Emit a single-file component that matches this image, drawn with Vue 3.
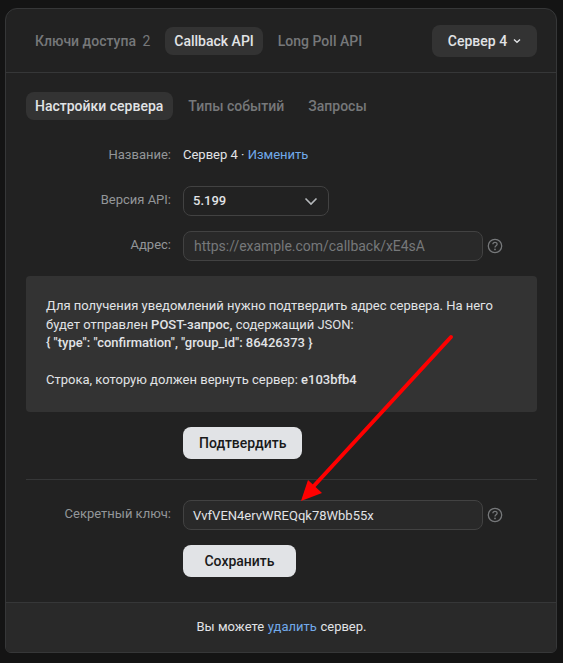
<template>
  <div class="page">
    <div class="card">
      <!-- Верхние вкладки -->
      <div class="head">
        <div class="tabs">
          <span class="tab">Ключи доступа <span class="count">2</span></span>
          <span class="tab active">Callback API</span>
          <span class="tab">Long Poll API</span>
        </div>
        <button class="server-btn">
          Сервер 4
          <svg width="10" height="10" viewBox="0 0 10 10"><path d="M2 3.5 L5 6.2 L8 3.5" fill="none" stroke="#e1e3e6" stroke-width="1.4" /></svg>
        </button>
      </div>

      <div class="body">
        <div class="subtabs">
          <span class="subtab active">Настройки сервера</span>
          <span class="subtab">Типы событий</span>
          <span class="subtab">Запросы</span>
        </div>

        <div class="row name-row">
          <div class="label">Название:</div>
          <div class="value">Сервер 4 · <a class="link">Изменить</a></div>
        </div>

        <div class="row version-row">
          <div class="label">Версия API:</div>
          <div class="select">
            <span class="select-text">5.199</span>
            <svg width="16" height="16" viewBox="0 0 16 16"><path d="M2.5 5.5 L8 11 L13.5 5.5" fill="none" stroke="#b5b8bb" stroke-width="1.6" /></svg>
          </div>
        </div>

        <div class="row address-row">
          <div class="label">Адрес:</div>
          <div class="input placeholder">https://example.com/callback/xE4sA</div>
          <svg class="help" width="16" height="16" viewBox="0 0 16 16">
            <circle cx="8" cy="8" r="6.7" fill="none" stroke="#76787a" stroke-width="1.3" />
            <path d="M5.9 6.3 C5.9 3.8 10.1 3.8 10.1 6.2 C10.1 7.7 8 7.7 8 9.4" fill="none" stroke="#76787a" stroke-width="1.3" />
            <circle cx="8" cy="11.4" r="0.9" fill="#76787a" />
          </svg>
        </div>

        <div class="info">
          Для получения уведомлений нужно подтвердить адрес сервера. На него<br />
          будет отправлен <b>POST-запрос,</b> содержащий JSON:<br />
          <b>{ "type": "confirmation", "group_id": 86426373 }</b><br />
          <br />
          Строка, которую должен вернуть сервер: <b>e103bfb4</b>
        </div>

        <div class="action confirm">
          <button class="btn">Подтвердить</button>
        </div>

        <div class="divider"></div>

        <div class="row secret-row">
          <div class="label">Секретный ключ:</div>
          <div class="input">VvfVEN4ervWREQqk78Wbb55x</div>
          <svg class="help" width="16" height="16" viewBox="0 0 16 16">
            <circle cx="8" cy="8" r="6.7" fill="none" stroke="#76787a" stroke-width="1.3" />
            <path d="M5.9 6.3 C5.9 3.8 10.1 3.8 10.1 6.2 C10.1 7.7 8 7.7 8 9.4" fill="none" stroke="#76787a" stroke-width="1.3" />
            <circle cx="8" cy="11.4" r="0.9" fill="#76787a" />
          </svg>
        </div>

        <div class="action save">
          <button class="btn">Сохранить</button>
        </div>
      </div>

      <div class="foot">Вы можете <a class="link">удалить</a> сервер.</div>
    </div>

    <!-- Красная стрелка поверх скриншота -->
    <svg class="arrow" width="563" height="663" viewBox="0 0 563 663">
      <line x1="451" y1="337" x2="312" y2="488" stroke="#ff0000" stroke-width="4" stroke-linecap="round" />
      <polygon points="301,501 308,480 322,493" fill="#ff0000" />
    </svg>
  </div>
</template>

<script setup>
</script>

<style>
html,
body {
  margin: 0;
  background: #141414;
}
</style>

<style scoped>
.page {
  position: relative;
  width: 563px;
  height: 663px;
  padding: 8px 6px 10px 5px;
  box-sizing: border-box;
  background: #141414;
  font-family: Roboto, "Noto Sans", sans-serif;
  font-size: 13px;
  color: #e1e3e6;
  overflow: hidden;
}

.card {
  height: 645px;
  display: flex;
  flex-direction: column;
  box-sizing: border-box;
  background: #222222;
  border: 1px solid #363738;
  border-radius: 12px 12px 6px 6px;
  overflow: hidden;
}

.head {
  height: 64px;
  flex: none;
  display: flex;
  align-items: center;
  justify-content: space-between;
  box-sizing: border-box;
  padding: 0 19px 0 20px;
  border-bottom: 1px solid #363738;
}

.tabs,
.subtabs {
  display: flex;
  align-items: center;
}

.tabs {
  gap: 6px;
}

.tab,
.subtab {
  height: 28px;
  line-height: 28px;
  padding: 0 9px;
  border-radius: 8px;
  color: #76787a;
  font-size: 14px;
  font-weight: 500;
  white-space: nowrap;
}

.tab .count {
  margin-left: 3px;
  font-weight: 400;
}

.tab.active,
.subtab.active {
  background: #333333;
  color: #e1e3e6;
}

.subtab.active {
  padding-right: 10px;
}

.server-btn {
  width: 105px;
  height: 32px;
  display: flex;
  align-items: center;
  justify-content: center;
  gap: 5px;
  padding: 0 0 0 1px;
  background: #333333;
  border: 0;
  border-radius: 8px;
  color: #e1e3e6;
  font: 500 14px Roboto, sans-serif;
}

.body {
  flex: 1;
  padding: 19px 19px 0 20px;
}

.subtabs {
  gap: 6px;
}

.row {
  display: flex;
  align-items: center;
}

.label {
  width: 145px;
  flex: none;
  margin-right: 12px;
  margin-bottom: 3px;
  text-align: right;
  color: #939699;
}

.name-row {
  margin-top: 22px;
  height: 24px;
}

.name-row .label {
  margin-bottom: 0;
}

.version-row {
  margin-top: 20px;
}

.address-row {
  margin-top: 15px;
}

.link {
  color: #71aaeb;
  text-decoration: none;
}

.select,
.input {
  height: 30px;
  display: flex;
  align-items: center;
  box-sizing: border-box;
  background: #292929;
  border: 1px solid #424242;
  border-radius: 8px;
  padding: 0 9px;
  white-space: nowrap;
}

.select {
  width: 146px;
  justify-content: space-between;
  background: #222222;
  font-weight: 500;
}

.select-text {
  margin-bottom: 1px;
}

.input {
  width: 300px;
  margin-right: 4px;
}

.placeholder {
  color: #76787a;
  font-size: 14px;
  padding-left: 10px;
  letter-spacing: -0.03px;
}

.help {
  flex: none;
}

.info {
  margin-top: 15px;
  height: 136px;
  box-sizing: border-box;
  padding: 21px 20px 0;
  background: #333333;
  border-radius: 4px;
  line-height: 18.6px;
}

.info b {
  font-weight: 500;
}

.action {
  padding-left: 157px;
}

.confirm {
  margin-top: 15px;
}

.btn {
  height: 32px;
  padding: 0 16px;
  background: #e1e3e6;
  border: 0;
  border-radius: 8px;
  color: #19191a;
  font: 500 14px Roboto, sans-serif;
}

.save .btn {
  width: 113px;
  padding: 0;
}

.divider {
  margin-top: 20px;
  height: 1px;
  background: #363738;
}

.secret-row {
  margin-top: 20px;
}

.save {
  margin-top: 15px;
}

.foot {
  height: 50px;
  flex: none;
  display: flex;
  align-items: center;
  justify-content: center;
  gap: 0.28em;
  box-sizing: border-box;
  padding: 0 0 2px 1px;
  background: #292929;
  border-top: 1px solid #363738;
}

.arrow {
  position: absolute;
  left: 0;
  top: 0;
  pointer-events: none;
}
</style>
